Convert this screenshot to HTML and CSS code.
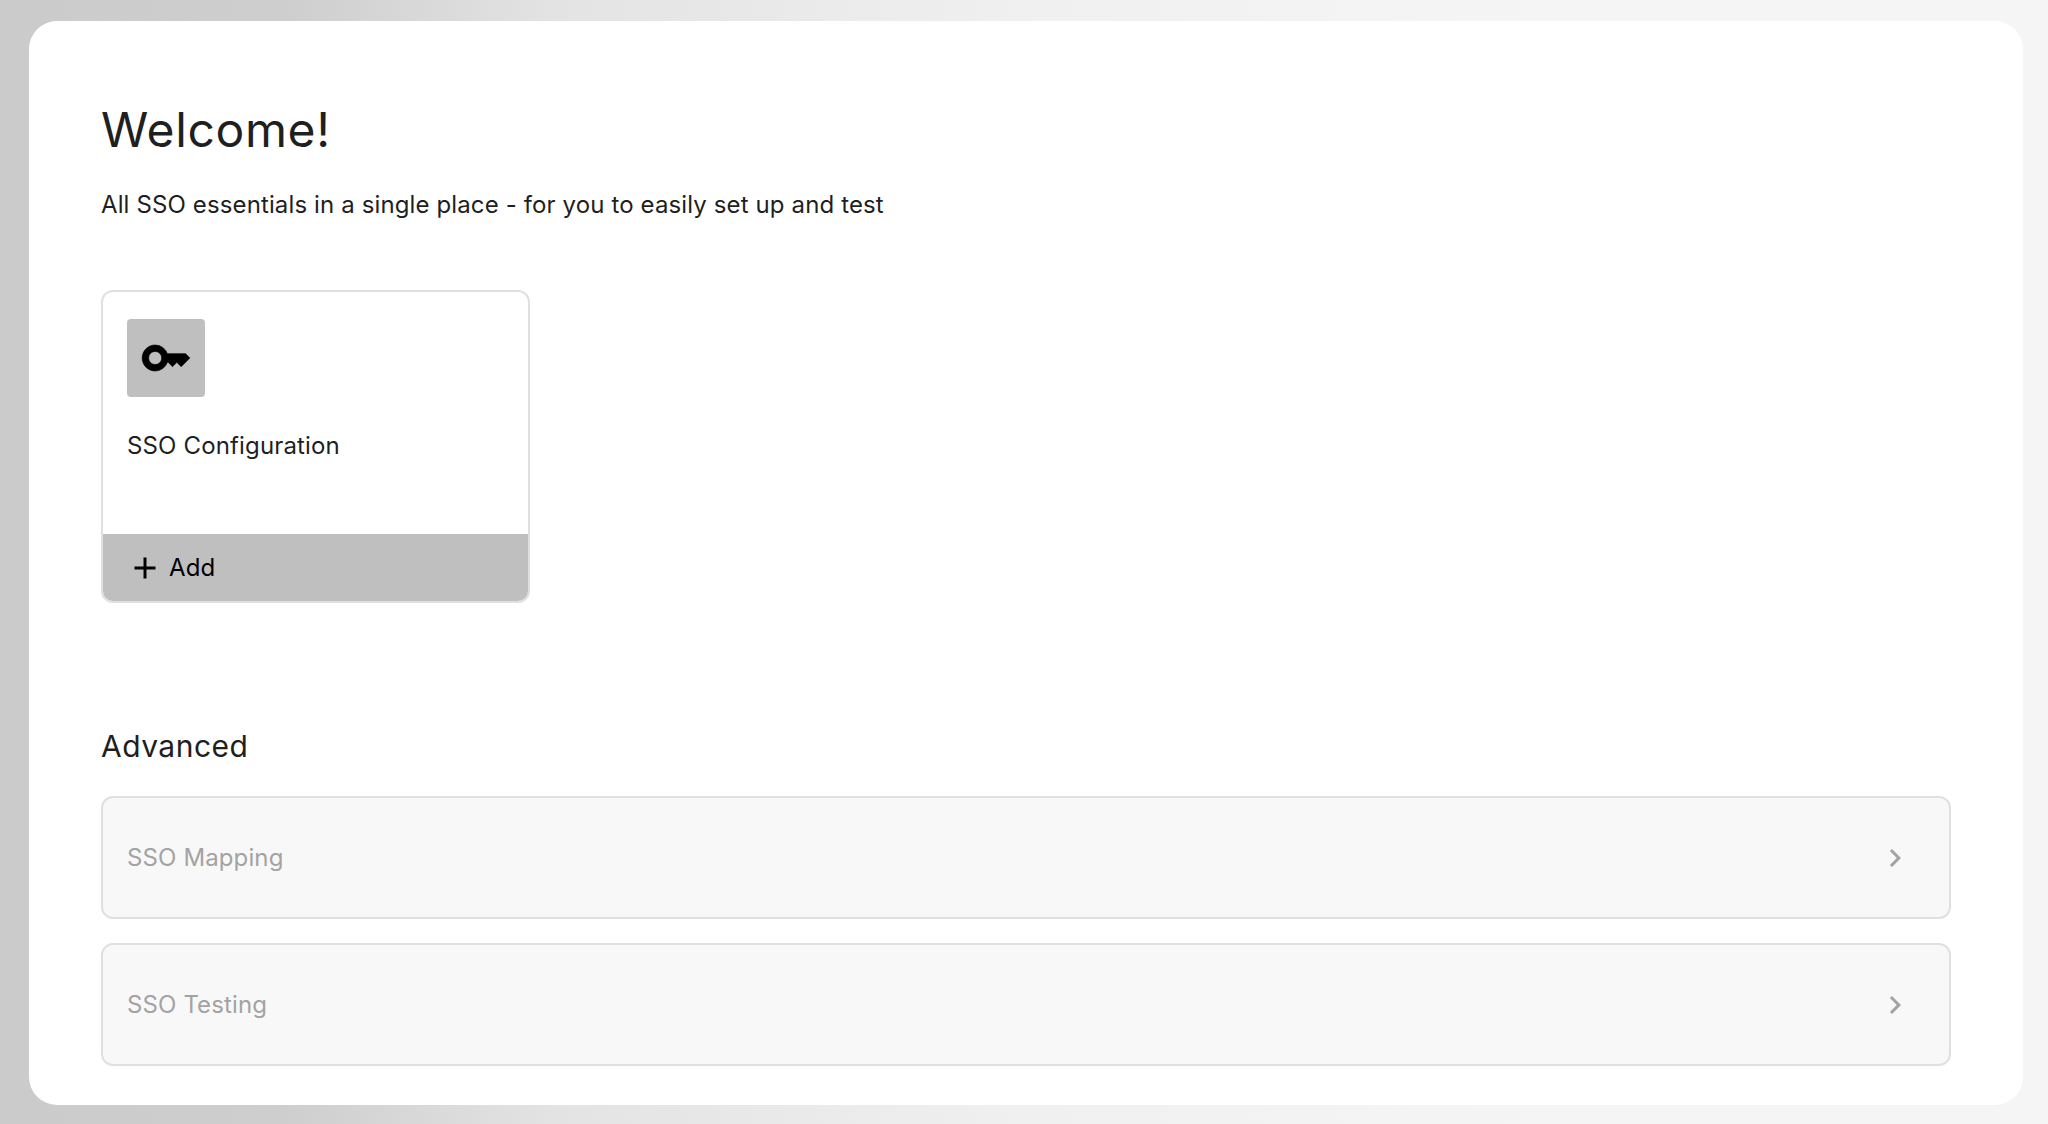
FILE: index.html
```html
<!DOCTYPE html>
<html lang="en">
<head>
<meta charset="utf-8">
<title>Welcome</title>
<link rel="stylesheet" href="styles.css">
</head>
<body>
<main class="panel">
  <h1 class="title">Welcome!</h1>
  <p class="subtitle">All SSO essentials in a single place - for you to easily set up and test</p>
  <section class="card">
    <div class="card-body">
      <div class="card-icon">
        <svg class="key" viewBox="0 0 24 24" width="52" height="52"><path d="M21 10h-8.35A5.99 5.99 0 0 0 7 6c-3.31 0-6 2.69-6 6s2.69 6 6 6a5.99 5.99 0 0 0 5.65-4H13l2 2 2-2 2 2 4-4.04L21 10zM7 15c-1.65 0-3-1.35-3-3s1.35-3 3-3 3 1.35 3 3-1.35 3-3 3z"/></svg>
      </div>
      <div class="card-name">SSO Configuration</div>
    </div>
    <div class="card-action">
      <svg viewBox="0 0 24 24" width="36" height="36"><path d="M19 13h-6v6h-2v-6H5v-2h6V5h2v6h6v2z"/></svg>
      <span>Add</span>
    </div>
  </section>
  <h2 class="section-title">Advanced</h2>
  <div class="rows">
    <div class="row">
      <span>SSO Mapping</span>
      <svg viewBox="0 0 24 24" width="36" height="36"><path d="M10 6L8.59 7.41 13.17 12l-4.58 4.59L10 18l6-6z"/></svg>
    </div>
    <div class="row">
      <span>SSO Testing</span>
      <svg viewBox="0 0 24 24" width="36" height="36"><path d="M10 6L8.59 7.41 13.17 12l-4.58 4.59L10 18l6-6z"/></svg>
    </div>
  </div>
</main>
</body>
</html>
```
FILE: styles.css
```css
* { box-sizing: border-box; }
html, body { height: 100%; }
body {
  margin: 0;
  padding: 21px 25px 19px 29px;
  background: linear-gradient(90deg, #cbcbcb 0%, #cecece 14%, #e3e3e3 27%, #f0f0f0 50%, #f5f5f5 75%);
  font-family: Inter, "Liberation Sans", sans-serif;
  color: #1f1f1f;
  overflow: hidden;
}
.panel {
  height: 1084px;
  padding: 81px 72px 0;
  background: #fff;
  border-radius: 28px;
}
.title {
  margin: 0;
  font-size: 48px;
  line-height: 56px;
  font-weight: 400;
  letter-spacing: .65px;
}
.subtitle {
  margin: 31px 0 0;
  font-size: 24px;
  line-height: 32px;
  letter-spacing: .125px;
}
.card {
  width: 429px;
  height: 313px;
  margin-top: 69px;
  display: flex;
  flex-direction: column;
  border: 2px solid #e0e0e0;
  border-radius: 12px;
  overflow: hidden;
}
.card-body { flex: 1; padding: 27px 24px 0; }
.card-icon {
  width: 78px;
  height: 78px;
  display: flex;
  align-items: center;
  justify-content: center;
  background: #bfbfbf;
  border-radius: 4px;
}
.key { fill: #000; stroke: #000; stroke-width: .3; }
.card-name { margin-top: 33px; font-size: 24px; line-height: 32px; letter-spacing: .15px; }
.card-action {
  height: 67px;
  display: flex;
  align-items: center;
  gap: 6px;
  padding-left: 24px;
  background: #bfbfbf;
  font-size: 24px;
  letter-spacing: .15px;
  color: #000;
}
.card-action svg { fill: #000; }
.section-title {
  margin: 0;
  margin-top: 123px;
  font-size: 30px;
  line-height: 40px;
  font-weight: 400;
  letter-spacing: .48px;
}
.rows { margin-top: 30px; display: flex; flex-direction: column; gap: 24px; }
.row {
  height: 123px;
  display: flex;
  align-items: center;
  justify-content: space-between;
  padding: 0 36px 0 24px;
  background: #f8f8f8;
  border: 2px solid #e0e0e0;
  border-radius: 12px;
  font-size: 24px;
  letter-spacing: .12px;
  color: #a3a3a3;
}
.row svg { fill: #a3a3a3; }
```
